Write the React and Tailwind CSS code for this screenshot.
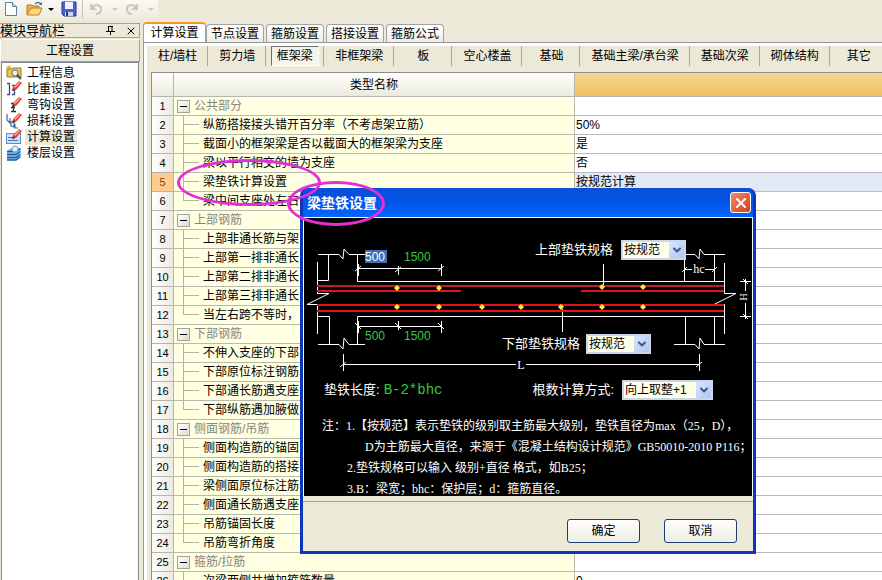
import React from 'react';
import { ChevronDown, X } from 'lucide-react';

const NAV_ITEMS = [
  { icon: 'info', label: '工程信息' },
  { icon: 'weight', label: '比重设置' },
  { icon: 'hook', label: '弯钩设置' },
  { icon: 'loss', label: '损耗设置' },
  { icon: 'calc', label: '计算设置', active: true },
  { icon: 'floor', label: '楼层设置' },
];

const TABS = ['计算设置', '节点设置', '箍筋设置', '搭接设置', '箍筋公式'];

const MEMBERS = [
  '柱/墙柱', '剪力墙', '框架梁', '非框架梁', '板', '空心楼盖',
  '基础', '基础主梁/承台梁', '基础次梁', '砌体结构', '其它',
];

const ROWS = [
  { name: '公共部分', group: true },
  { name: '纵筋搭接接头错开百分率（不考虑架立筋）', value: '50%' },
  { name: '截面小的框架梁是否以截面大的框架梁为支座', value: '是' },
  { name: '梁以平行相交的墙为支座', value: '否' },
  { name: '梁垫铁计算设置', value: '按规范计算', selected: true },
  { name: '梁中间支座处左右', last: true },
  { name: '上部钢筋', group: true },
  { name: '上部非通长筋与架' },
  { name: '上部第一排非通长' },
  { name: '上部第二排非通长' },
  { name: '上部第三排非通长' },
  { name: '当左右跨不等时，', last: true },
  { name: '下部钢筋', group: true },
  { name: '不伸入支座的下部' },
  { name: '下部原位标注钢筋' },
  { name: '下部通长筋遇支座' },
  { name: '下部纵筋遇加腋做', last: true },
  { name: '侧面钢筋/吊筋', group: true },
  { name: '侧面构造筋的锚固' },
  { name: '侧面构造筋的搭接' },
  { name: '梁侧面原位标注筋' },
  { name: '侧面通长筋遇支座' },
  { name: '吊筋锚固长度' },
  { name: '吊筋弯折角度', last: true },
  { name: '箍筋/拉筋', group: true },
  { name: '次梁两侧共增加箍筋数量', value: '0' },
];

// Red pencil shared by several of the navigation icons
const Pencil = () => (
  <g>
    <path d="M6 10l1-4 6-6 3 2-6 7z" fill="#d9483f" />
    <path d="M8 6l5-5 1 1-5 5z" fill="#f7a79c" />
    <path d="M6 10l1-3 2 2z" fill="#4a3030" />
  </g>
);

const NavIcon = ({ name }) => (
  <svg viewBox="0 0 16 16" className="w-4 h-4 shrink-0" aria-hidden="true">
    {name === 'info' && (
      <g>
        <path d="M1 4h5l1-1h8v9H1z" fill="#e9c64c" stroke="#9c7a1e" />
        <path d="M3 0v6M0 3h6M1 1l4 4M5 1L1 5" stroke="#d8a91c" />
        <circle cx="9" cy="8" r="3" fill="#e4f0fa" stroke="#68809c" strokeWidth="1.2" />
        <path d="M11 10l4 4" stroke="#3b4c66" strokeWidth="2" />
      </g>
    )}
    {name === 'weight' && (
      <g>
        <path d="M1 2.500h2.500v11H1M6 4.500h2.500v9H6" fill="none" stroke="#33547e" strokeWidth="1.3" />
        <Pencil />
      </g>
    )}
    {name === 'hook' && (
      <g>
        <path d="M5 6.500h3M7.500 9v5M5 14.500h5M5 10.500h4" fill="none" stroke="#333" strokeWidth="1.3" />
        <Pencil />
      </g>
    )}
    {name === 'loss' && (
      <g>
        <path d="M1 1v6l3 3V5M5 8v5l3 1V9M9 11v4h3" fill="none" stroke="#3c6ea5" strokeWidth="1.2" />
        <Pencil />
      </g>
    )}
    {name === 'calc' && (
      <g>
        <rect x="0.5" y="4.5" width="14" height="10" fill="#cfe2fa" stroke="#5a8fd0" />
        <path d="M2 8.500h4M2 11.500h10" stroke="#3978c4" />
        <Pencil />
      </g>
    )}
    {name === 'floor' && (
      <g>
        <path d="M1 6l4-3h10v9l-4 3H1z" fill="#8fbdea" />
        <path d="M1 6.500h9l4-3M1 9.500h9l4-3M1 12.500h9l4-3M1 15h9l4-3" fill="none" stroke="#1c5aa8" strokeWidth="1.4" />
        <circle cx="9" cy="4" r="3" fill="#e4f2fb" stroke="#7d9cb8" />
      </g>
    )}
  </svg>
);

const Caret = ({ className }) => (
  <svg viewBox="0 0 6 3" className={`w-[6px] h-[3px] ${className}`} aria-hidden="true">
    <path d="M0 0h6L3 3z" fill="currentColor" />
  </svg>
);

const Toolbar = () => (
  <div className="flex items-center h-[18px] w-[158px] pl-[3px] bg-linear-to-b from-[#f9f8f3] to-[#efede0] rounded-br">
    <button aria-label="新建">
      <svg viewBox="0 0 16 16" className="w-4 h-4">
        <path d="M2.500 1.500h7l4 4v9h-11z" fill="#fff" stroke="#5f7c9f" />
        <path d="M9.500 1.500v4h4" fill="#cfdff2" stroke="#5f7c9f" />
      </svg>
    </button>
    <button aria-label="打开" className="flex items-center ml-[7px]">
      <svg viewBox="0 0 18 16" className="w-[18px] h-4">
        <path d="M1 14V4h5l1 1h6v3" fill="#e8b94a" stroke="#b07d1c" />
        <path d="M1 14l4-7h11l-3 7z" fill="#fbd77c" stroke="#b98522" />
        <path d="M9 3c2-2 4-2 6 0" fill="none" stroke="#3f6ea8" strokeWidth="1.2" />
        <path d="M16 1v3h-3z" fill="#3f6ea8" />
      </svg>
      <Caret className="text-black ml-1" />
    </button>
    <button aria-label="保存" className="ml-[7px]">
      <svg viewBox="0 0 16 16" className="w-4 h-4">
        <path d="M1 1h14v14H3l-2-2z" fill="#4a63d0" stroke="#22378a" />
        <path d="M4 1h8v7H4z" fill="#eef4ff" />
        <path d="M4 11h8v4H4z" fill="#c9d3ea" />
        <path d="M5 11h2v4H5z" fill="#22378a" />
      </svg>
    </button>
    <span className="w-px h-[18px] ml-[5px] bg-[#c5c2b0]" />
    <button aria-label="撤销" className="flex items-center ml-[6px] text-[#c9c7be]">
      <svg viewBox="0 0 14 14" className="w-[14px] h-[14px]">
        <path d="M3 6c3-5 10-3 9 2-.5 3-3 4-5 4" fill="none" stroke="currentColor" strokeWidth="2" />
        <path d="M1 1v7h7z" fill="currentColor" />
      </svg>
      <Caret className="ml-[9px]" />
    </button>
    <button aria-label="重做" className="flex items-center ml-[7px] text-[#c9c7be]">
      <svg viewBox="0 0 14 14" className="w-[14px] h-[14px]">
        <path d="M11 6C8 1 1 3 2 8c.5 3 3 4 5 4" fill="none" stroke="currentColor" strokeWidth="2" />
        <path d="M13 1v7H6z" fill="currentColor" />
      </svg>
      <Caret className="ml-[9px]" />
    </button>
  </div>
);

const Sidebar = () => (
  <aside className="flex flex-col w-[140px] shrink-0 pt-[5px]">
    <div className="flex items-center h-[15px] border border-l-0 border-[#a5a294] text-[13px]">
      <span className="whitespace-nowrap">模块导航栏</span>
      <button aria-label="固定" className="ml-auto mr-[10px]">
        <svg viewBox="0 0 9 9" className="w-[9px] h-[9px]">
          <path d="M2 .5h5M2.500 .5v5M6 0v6M0 5.500h9M4.500 6v3" fill="none" stroke="#000" />
        </svg>
      </button>
      <button aria-label="关闭" className="mr-[2px]"><X className="w-3 h-3" strokeWidth={2} /></button>
    </div>
    <button className="h-[23px] mt-px border border-t-white border-l-white border-b-[#a5a294] border-r-[#a5a294]">工程设置</button>
    <ul className="flex-1 bg-white border border-b-0 border-[#7f8a96] ml-px mr-px pt-[2px] pl-1">
      {NAV_ITEMS.map((item) => (
        <li key={item.label}>
          <a href="#" className="flex items-center h-4">
            <NavIcon name={item.icon} />
            <span className={`ml-[3px] px-[2px] h-4 leading-4 ${item.active ? 'bg-[#ece9d8]' : ''}`}>{item.label}</span>
          </a>
        </li>
      ))}
    </ul>
  </aside>
);

const TreeCell = ({ row }) => {
  if (row.group) {
    return (
      <div className="flex items-center h-[18px] pl-[3px] text-[#87877f]">
        <button aria-label="折叠" className="flex items-center justify-center w-[13px] h-[13px] border border-[#a3a39c] bg-linear-to-br from-white to-[#dcdcd4]">
          <span className="w-[7px] h-px bg-black" />
        </button>
        <span className="ml-1">{row.name}</span>
      </div>
    );
  }
  return (
    <div className="flex items-center h-[18px] pl-[9px]">
      <span className="w-4">
        <span className="block h-[9px] border-l border-b border-[#b4b4a6]" />
        <span className={`block h-[9px] ${row.last ? '' : 'border-l border-[#b4b4a6]'}`} />
      </span>
      <span className="ml-1 whitespace-nowrap">{row.name}</span>
    </div>
  );
};

const SettingsTable = () => (
  <table className="w-full table-fixed border-separate border-spacing-0 border-t border-l border-[#8b8e90]">
    <colgroup>
      <col className="w-[22px]" />
      <col className="w-[401px]" />
      <col />
    </colgroup>
    <thead>
      <tr className="h-6">
        <th className="p-0 border-r border-b border-[#b5b5ad] bg-linear-to-b from-white to-[#ebe9de]" />
        <th className="p-0 font-normal border-r border-b border-[#b5b5ad] bg-linear-to-b from-white to-[#ebe9de]">类型名称</th>
        <th className="p-0 border-b border-[#b5b5ad] bg-linear-to-b from-[#f8d690] to-[#efc060]" />
      </tr>
    </thead>
    <tbody>
      {ROWS.map((row, i) => (
        <tr key={row.name} className="h-[19px]">
          <td className={`p-0 h-[19px] text-center text-[11px] leading-[18px] border-r border-b border-[#b5b5ad] ${row.selected ? 'bg-[#fbcd8e] text-[#8a3b10]' : 'bg-linear-to-r from-white to-[#eceae0]'}`}>
            {i + 1}
          </td>
          <td className="p-0 border-r border-b border-[#b9b9b0] bg-[#ffffe1]"><TreeCell row={row} /></td>
          <td className={`p-0 pl-px leading-[18px] border-b border-[#babac2] ${row.selected ? 'bg-[#e1e9f4]' : 'bg-white'}`}>{row.value}</td>
        </tr>
      ))}
    </tbody>
  </table>
);

const Workspace = () => (
  <main className="flex-1 min-w-0 flex flex-col ml-[3px] pt-1">
    <div className="flex items-end h-5">
      {TABS.map((tab, i) =>
        i === 0 ? (
          <button key={tab} className="w-[63px] h-5 bg-white border-t-2 border-t-[#f09a1f] border-x border-[#9da3a8] rounded-t-sm">{tab}</button>
        ) : (
          <button key={tab} className="w-[58px] h-[18px] mr-[2px] leading-4 bg-linear-to-b from-white to-[#efede2] border border-b-0 border-[#9da3a8] rounded-t-sm">{tab}</button>
        )
      )}
    </div>
    <div className="flex-1 border-l border-t border-[#9097a0]">
      <div className="border-l-3 border-t-3 border-white">
        <div className="flex h-[26px] overflow-hidden">
          {MEMBERS.map((member) => (
            <div key={member} className="shrink-0 min-w-[58px] h-5 flex justify-center border-r border-[#aaa798]">
              <button className={`h-5 ${member === '框架梁' ? 'mx-1 px-[5px] bg-[#f5f3ea] border border-t-[#716f64] border-l-[#716f64] border-white' : 'pl-[11px] pr-[10px]'}`}>
                {member}
              </button>
            </div>
          ))}
        </div>
        <div className="pl-1">
          <SettingsTable />
        </div>
      </div>
    </div>
  </main>
);

const Dropdown = ({ id, value, width }) => (
  <span className="relative inline-block">
    <select id={id} defaultValue={value} className={`${width} h-5 pl-px appearance-none bg-[#ffffe8] text-black text-[12px] leading-4 border-2 border-[#c9d8e8] outline-none`}>
      <option>{value}</option>
    </select>
    <span className="absolute right-[2px] top-[2px] w-[15px] h-4 flex items-center justify-center bg-linear-to-br from-[#dbe5ff] to-[#aec4f5] pointer-events-none">
      <ChevronDown className="w-3 h-3 text-[#41577f]" strokeWidth={4} />
    </span>
  </span>
);

const DIAMONDS = [
  [93, 70], [135, 70], [298, 69], [339, 69],
  [93, 89], [135, 89], [178, 89], [217, 89], [257, 89], [298, 89], [339, 89],
];

const BeamDrawing = () => (
  <svg viewBox="0 0 448 158" className="block w-[448px] h-[158px]" aria-hidden="true">
    <g fill="none" stroke="#fff" strokeWidth="1">
      {/* left support */}
      <path d="M14 36.500H35L39 41L40 31L45 36.500H61" />
      <path d="M24.500 37V62.500H13M53.500 37V63.500H420" />
      <path d="M13.500 44V75.500H25L3 86.500H13.500V116" />
      <path d="M13 98.500H25.500V126M53.500 126V98.500H420" />
      <path d="M14 126.500H35L39 131L40 120L45 126.500H61" />
      {/* right support */}
      <path d="M382 36.500H391L395 41L396 31L400 36.500H421" />
      <path d="M380.500 42V63M410.500 37V63M381.500 98V126M410.500 98V126" />
      <path d="M420.500 45V75.500H432L410 86.500H420.500V116" />
      <path d="M370 126.500H391L395 131L396 120L400 126.500H421" />
      {/* spacer dimensions */}
      <path d="M54 50.500H137M54.500 46V58M94.500 48V57M137.500 46V58M51 53L57 48M91 54L97 49M134 53L140 48" />
      <path d="M54 108.500H137M54.500 103V115M94.500 103V112M137.500 103V115M51 105L57 111M91 105L97 111M134 105L140 111" />
      {/* span, column width and beam height */}
      <path d="M39 146.500H212M222 146.500H395M39.500 136V153M395.500 136V153M36 149L42 144M392 149L398 144" />
      <path d="M380 51.500H388M401 51.500H410M378 54L383 49M408 54L413 49" />
      <path d="M436 63.500H447M436 98.500H447M441.500 61V73M441.500 85V101M439 61L444 66M439 96L444 101" />
      {/* leaders */}
      <path d="M299.500 46V68M258.500 91V114" />
    </g>
    <g strokeWidth="2">
      <path d="M13 68H420" stroke="#b8202a" />
      <path d="M13 73H157M277 73H420M13 87H420M13 93H420" stroke="#e01515" />
    </g>
    {DIAMONDS.map(([x, y]) => (
      <path key={`${x}-${y}`} d={`M${x} ${y - 3}l3 3-3 3-3-3z`} fill="#ffe93b" />
    ))}
    <g fill="#fff" fontFamily="Liberation Serif, serif" fontSize="12" textAnchor="middle">
      <text x="395" y="55">hc</text>
      <text x="217" y="151">L</text>
      <text x="0" y="0" fontSize="10" transform="translate(443 79) rotate(-90)">H</text>
    </g>
  </svg>
);

const SpacerDialog = () => (
  <section role="dialog" aria-label="梁垫铁设置" className="absolute left-[300px] top-[188px] bg-[#0a3fd2] rounded-t-lg border-x-3 border-b-3 border-[#0c36c0]">
    <header className="flex items-center justify-between h-[29px] pl-1 pr-[2px] rounded-t-md bg-linear-to-b from-[#0a4fd8] via-[#0055e5] to-[#0366ff]">
      <h2 className="text-[14px] font-bold text-white">梁垫铁设置</h2>
      <button aria-label="关闭" className="flex items-center justify-center w-[21px] h-[21px] rounded-[3px] border border-white bg-linear-to-br from-[#f08a68] to-[#d23c14]">
        <X className="w-4 h-4 text-white" strokeWidth={3} />
      </button>
    </header>
    <div className="bg-black border border-b-0 border-white text-white">
      <div className="relative">
        <BeamDrawing />
        <input aria-label="上部边距" defaultValue="500" className="absolute left-[61px] top-[32px] w-[22px] h-[13px] bg-[#3f6fb5] text-white text-[12px]" />
        <input aria-label="上部间距" defaultValue="1500" className="absolute left-[100px] top-[32px] w-[30px] h-[13px] text-[#35c940] text-[12px]" />
        <input aria-label="下部边距" defaultValue="500" className="absolute left-[61px] top-[111px] w-[22px] h-[13px] text-[#35c940] text-[12px]" />
        <input aria-label="下部间距" defaultValue="1500" className="absolute left-[100px] top-[111px] w-[30px] h-[13px] text-[#35c940] text-[12px]" />
        <div className="absolute left-[231px] top-[22px] flex items-center gap-2 text-[13px]">
          <label htmlFor="top-spec">上部垫铁规格</label>
          <Dropdown id="top-spec" value="按规范" width="w-[65px]" />
        </div>
        <div className="absolute left-[198px] top-[116px] flex items-center gap-[6px] text-[13px]">
          <label htmlFor="bottom-spec">下部垫铁规格</label>
          <Dropdown id="bottom-spec" value="按规范" width="w-[65px]" />
        </div>
      </div>
      <div className="flex items-center h-7 pl-5 text-[13px]">
        <span>垫铁长度:</span>
        <span className="ml-1 text-[14px] font-['Liberation_Mono',monospace] text-[#35c940]">B-2*bhc</span>
        <div className="flex items-center gap-2 ml-auto mr-[39px]">
          <label htmlFor="count-mode">根数计算方式:</label>
          <Dropdown id="count-mode" value="向上取整+1" width="w-[91px]" />
        </div>
      </div>
      <div className="mt-3 -mb-1 leading-[21px] whitespace-nowrap font-['Liberation_Serif','Noto_Sans_CJK_SC',serif]">
        <p className="pl-[18px]">注：1.【按规范】表示垫铁的级别取主筋最大级别，垫铁直径为max（25，D），</p>
        <p className="pl-[61px]">D为主筋最大直径，来源于《混凝土结构设计规范》GB50010-2010 P116；</p>
        <p className="pl-[43px]">2.垫铁规格可以输入 级别+直径 格式，如B25；</p>
        <p className="pl-[43px]">3.B：梁宽；bhc：保护层；d：箍筋直径。</p>
      </div>
    </div>
    <footer className="bg-[#ece9d8] pt-[5px]">
      <div className="flex justify-end gap-6 pt-[17px] pb-2 pr-4 border-t border-[#a7a596]">
        <button className="w-[73px] h-6 bg-linear-to-b from-white to-[#eeede5] border border-[#1c3f6e] rounded-[3px]">确定</button>
        <button className="w-[73px] h-6 bg-linear-to-b from-white to-[#eeede5] border border-[#1c3f6e] rounded-[3px]">取消</button>
      </div>
    </footer>
  </section>
);

const App = () => (
  <div className="relative flex flex-col h-screen overflow-hidden bg-[#ece9d8] text-black text-[12px] leading-4 font-['Liberation_Sans','Noto_Sans_CJK_SC',sans-serif]">
    <Toolbar />
    <div className="flex flex-1 min-h-0">
      <Sidebar />
      <Workspace />
    </div>
    <SpacerDialog />
    {/* Hand-drawn callouts */}
    <div className="absolute left-[177px] top-[159px] w-[144px] h-[47px] rounded-[50%] border-3 border-[#e22fd8] pointer-events-none" />
    <div className="absolute left-[287px] top-[181px] w-[98px] h-[45px] rounded-[50%] border-3 border-[#e22fd8] pointer-events-none" />
  </div>
);

export default App;
